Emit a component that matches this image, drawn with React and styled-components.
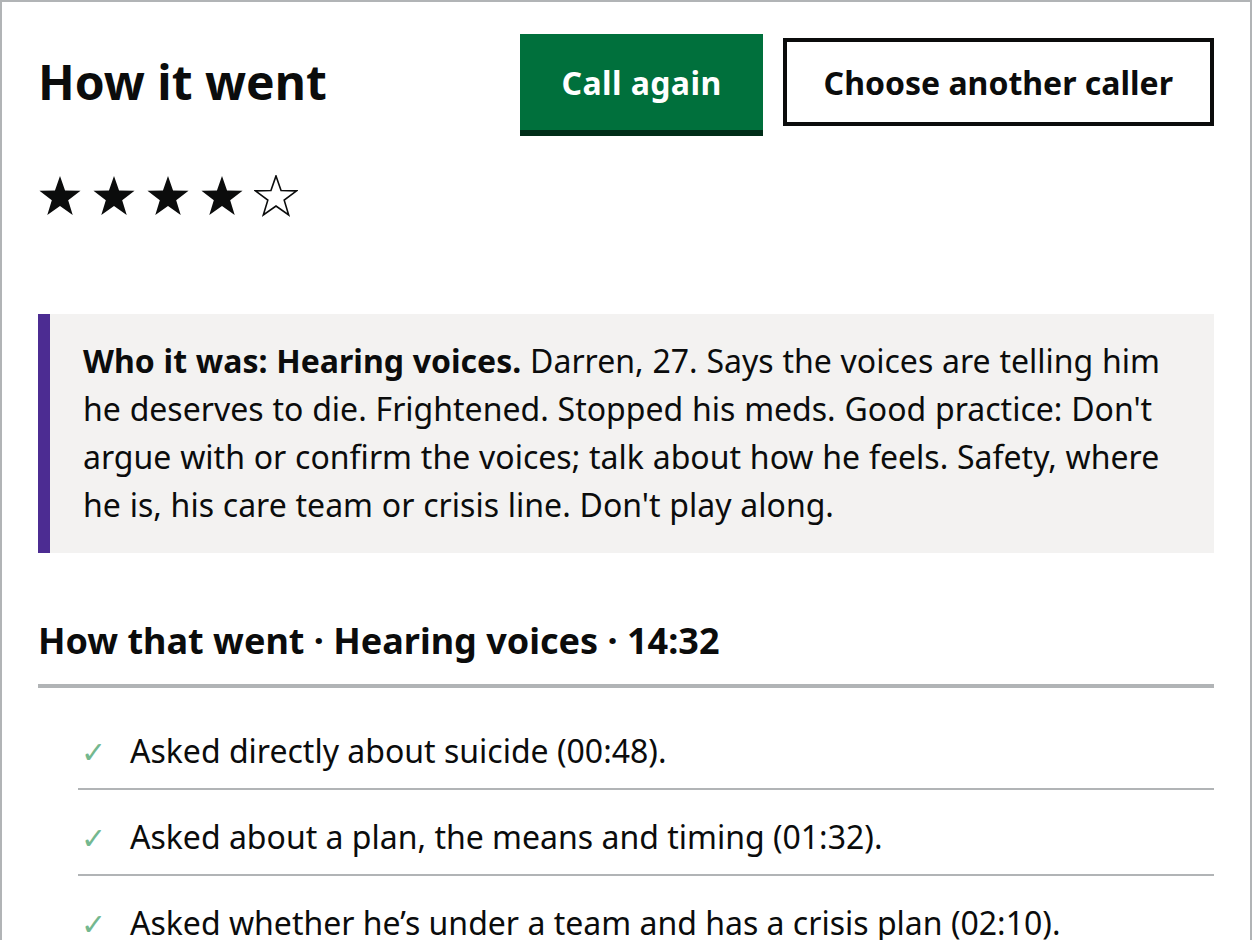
import React from "react";
import styled, { createGlobalStyle } from "styled-components";

const GlobalStyle = createGlobalStyle`
  html, body {
    margin: 0;
    padding: 0;
    background: #ffffff;
  }
  body {
    font-family: "Noto Sans", "Liberation Sans", Arial, sans-serif;
    color: #0b0c0c;
  }
`;

const Viewport = styled.div`
  height: 100vh;
  overflow: hidden;
`;

const Frame = styled.div`
  box-sizing: border-box;
  border: 2px solid #b1b4b6;
  padding: 32px 36px 120px 36px;
`;

const Header = styled.div`
  display: flex;
  flex-direction: row;
  align-items: center;
  justify-content: space-between;
  height: 96px;
`;

const Title = styled.h1`
  margin: 0;
  font-size: 48px;
  line-height: 56px;
  font-weight: 700;
`;

const Actions = styled.div`
  display: flex;
  align-items: center;
  gap: 20px;
`;

const PrimaryButton = styled.button`
  box-sizing: border-box;
  height: 96px;
  padding: 0 41px 0 42px;
  border: none;
  background: #00703c;
  box-shadow: 0 6px 0 #002d18;
  color: #ffffff;
  font-family: inherit;
  font-size: 32px;
  font-weight: 700;
  letter-spacing: 0.4px;
  cursor: pointer;
`;

const SecondaryButton = styled.button`
  box-sizing: border-box;
  height: 88px;
  padding: 0 37px;
  border: 4px solid #0b0c0c;
  background: #ffffff;
  color: #0b0c0c;
  font-family: inherit;
  font-size: 32px;
  font-weight: 700;
  cursor: pointer;
`;

const Stars = styled.div`
  display: flex;
  gap: 10px;
  margin-top: 45px;
`;

const Inset = styled.div`
  margin-top: 97px;
  background: #f3f2f1;
  border-left: 12px solid #4c2c92;
  padding: 23px 33px 24px 33px;
  font-size: 32px;
  line-height: 48px;
  word-spacing: 0.5px;
`;

const SectionTitle = styled.h2`
  margin: 64px 0 0 0;
  padding-bottom: 19px;
  border-bottom: 4px solid #b1b4b6;
  font-size: 36px;
  line-height: 48px;
  font-weight: 700;
`;

const Checklist = styled.ul`
  list-style: none;
  margin: 16px 0 0 40px;
  padding: 0;
`;

const CheckItem = styled.li`
  display: flex;
  align-items: baseline;
  padding: 27px 0 17px 0;
  border-bottom: 2px solid #b1b4b6;
  font-size: 32px;
  line-height: 40px;
`;

const Tick = styled.span`
  width: 52px;
  flex: none;
  padding-left: 3px;
  box-sizing: border-box;
  font-family: "DejaVu Sans", sans-serif;
  font-size: 30px;
  line-height: 1;
  color: ${(p) => (p.missed ? "#d4351c" : "#74b88f")};
`;

function starPath(cx, cy, R, r) {
  const pts = [];
  for (let i = 0; i < 10; i++) {
    const rad = i % 2 === 0 ? R : r;
    const a = (Math.PI / 5) * i - Math.PI / 2;
    pts.push(`${(cx + rad * Math.cos(a)).toFixed(2)},${(cy + rad * Math.sin(a)).toFixed(2)}`);
  }
  return "M" + pts.join("L") + "Z";
}

function Star({ filled }) {
  const d = starPath(22, 22.5, 21.6, 8.6);
  return (
    <svg width="44" height="42" viewBox="0 0 44 42">
      <path
        d={d}
        fill={filled ? "#0b0c0c" : "#ffffff"}
        stroke="#0b0c0c"
        strokeWidth={filled ? 0 : 1.6}
        strokeLinejoin="miter"
      />
    </svg>
  );
}

const checks = [
  "Asked directly about suicide (00:48).",
  "Asked about a plan, the means and timing (01:32).",
  "Asked whether he\u2019s under a team and has a crisis plan (02:10).",
  "Stayed calm and didn\u2019t argue with the voices (04:05).",
];

function App() {
  const rating = 4;
  return (
    <Viewport>
      <GlobalStyle />
      <Frame>
        <Header>
          <Title>How it went</Title>
          <Actions>
            <PrimaryButton>Call again</PrimaryButton>
            <SecondaryButton>Choose another caller</SecondaryButton>
          </Actions>
        </Header>
        <Stars>
          {[1, 2, 3, 4, 5].map((n) => (
            <Star key={n} filled={n <= rating} />
          ))}
        </Stars>
        <Inset>
          <strong>Who it was: Hearing voices.</strong> Darren, 27. Says the
          voices are telling him he deserves to die. Frightened. Stopped his
          meds. Good practice: Don't argue with or confirm the voices; talk
          about how he feels. Safety, where he is, his care team or crisis
          line. Don't play along.
        </Inset>
        <SectionTitle>How that went · Hearing voices · 14:32</SectionTitle>
        <Checklist>
          {checks.map((c) => (
            <CheckItem key={c}>
              <Tick>✓</Tick>
              <span>{c}</span>
            </CheckItem>
          ))}
        </Checklist>
      </Frame>
    </Viewport>
  );
}

export default App;
